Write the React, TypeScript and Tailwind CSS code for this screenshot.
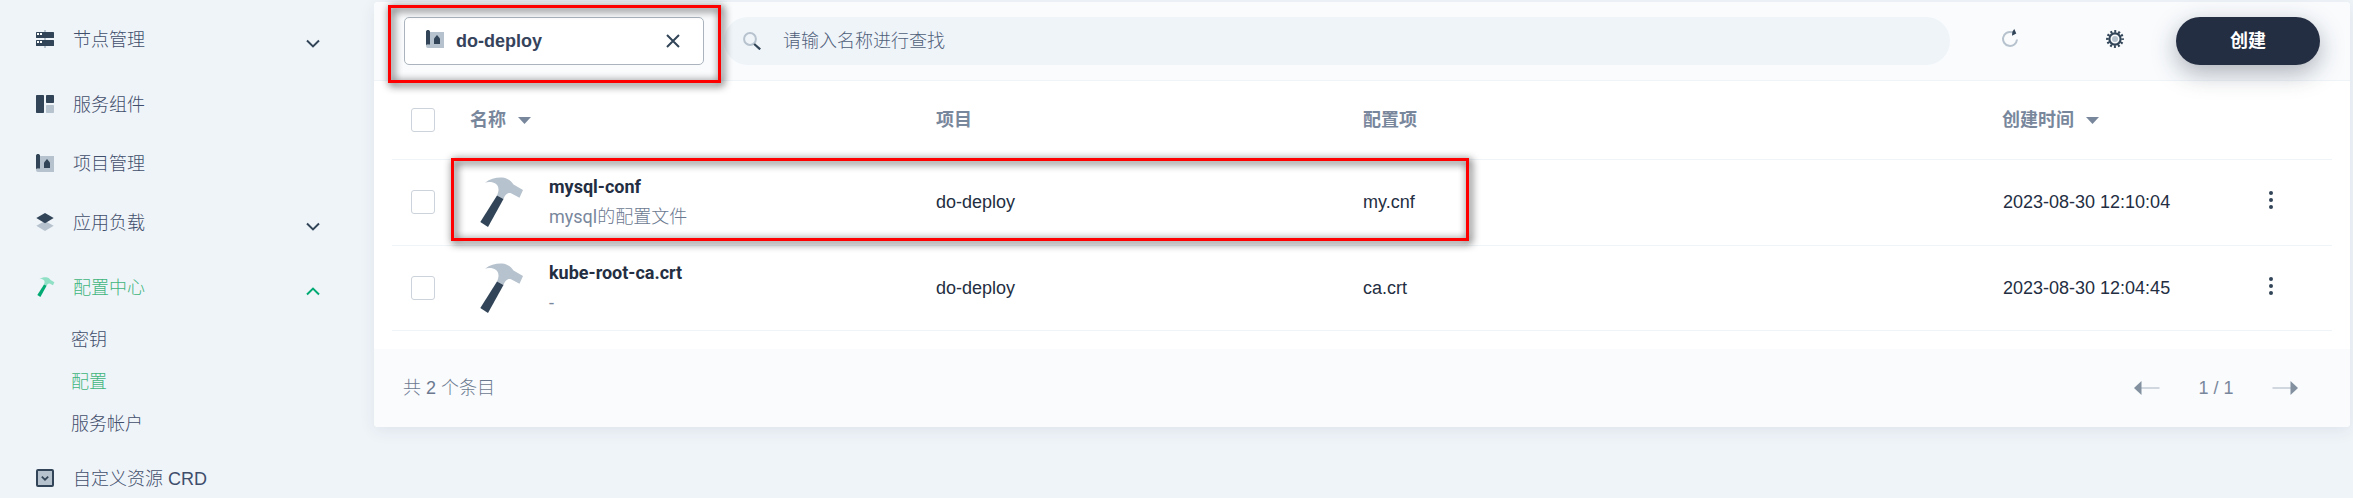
import React from "react";

const DARK = "#324558";
const LIGHT = "#b6c2cd";

function NodesIcon() {
  return (
    <svg width="18" height="18" viewBox="0 0 18 18" className="shrink-0">
      <path d="M8 0h2v18H8z" fill={LIGHT} />
      <rect y="2" width="18" height="6" rx="0.5" fill={DARK} />
      <rect y="10" width="18" height="6" rx="0.5" fill={DARK} />
      <path d="M1 3h2v2H1zM4 3h2v2H4zM1 11h2v2H1zM4 11h2v2H4z" fill="#fff" />
    </svg>
  );
}

function ComponentsIcon() {
  return (
    <svg width="18" height="18" viewBox="0 0 18 18" className="shrink-0">
      <rect width="8" height="18" rx="0.7" fill={DARK} />
      <rect x="10" width="8" height="8" rx="0.7" fill={DARK} />
      <rect x="10" y="10" width="8" height="8" rx="0.7" fill={LIGHT} />
    </svg>
  );
}

function ProjectIcon() {
  return (
    <svg width="18" height="18" viewBox="0 0 18 18" className="shrink-0">
      <path d="M4 2h14v16H2a2 2 0 0 1-2-2v-1l4-1z" fill={LIGHT} />
      <path d="M0 15V1.500C0 .6.9 0 2 0s2 .6 2 1.500V14.500H2Q.6 14.400 0 15z" fill={DARK} />
      <path d="M8 14V8.500L11 5l3 3.500V14z" fill={DARK} />
    </svg>
  );
}

function LayersIcon() {
  return (
    <svg width="18" height="18" viewBox="0 0 18 18" className="shrink-0">
      <path d="M9 8l8.700 4.800L9 18 .3 12.800z" fill={LIGHT} />
      <path d="M9 0l8.700 5L9 10.200.3 5z" fill={DARK} />
    </svg>
  );
}

function Hammer({ size, head, handle }: { size: number; head: string; handle: string }) {
  return (
    <svg width={size} height={size} viewBox="0 0 50 50" className="shrink-0">
      <path d="M8 5.700C13 1.500 19 .2 25 .4c5 .4 9 3 11.500 7L46 13l-3.500 7.800L34 16.200c-4-.7-6 2-7.500 5.800L20 18.500C23 12 21.500 7 16 5.500 13 4.900 10 5 8 5.700z" fill={head} />
      <path d="M20 18.500l6.500 3.500L11 50l-7.700-5z" fill={handle} />
    </svg>
  );
}

function CrdIcon() {
  return (
    <svg width="18" height="18" viewBox="0 0 18 18" className="shrink-0">
      <rect x="1" y="1" width="16" height="16" rx="1" fill={LIGHT} stroke={DARK} strokeWidth="2" />
      <path d="M5.800 7.600L9 10.700l3.200-3.100" fill="none" stroke={DARK} strokeWidth="1.700" />
    </svg>
  );
}

function Chevron({ up = false }: { up?: boolean }) {
  return (
    <svg width="14" height="9" viewBox="0 0 14 9" className="mt-1.5 shrink-0">
      <path d={up ? "M1 7.500L7 1.600l6 5.900" : "M1 1.500l6 5.900 6-5.900"} fill="none" stroke={up ? "#00aa72" : DARK} strokeWidth="2" />
    </svg>
  );
}

function NavItem({ icon, label, className, chevron }: { icon: React.ReactNode; label: string; className: string; chevron?: React.ReactNode }) {
  return (
    <div className={`flex h-7 items-center pl-9 pr-[54px] ${className}`}>
      <span className="-mt-[3px] flex w-[37px] shrink-0">{icon}</span>
      <span className="flex-1 whitespace-nowrap">{label}</span>
      {chevron}
    </div>
  );
}

function Sidebar() {
  return (
    <nav className="w-[374px] shrink-0 pt-[26px] text-[#3f4e6b] font-light">
      <NavItem icon={<NodesIcon />} label="节点管理" className="mb-[37px]" chevron={<Chevron />} />
      <NavItem icon={<ComponentsIcon />} label="服务组件" className="mb-[31px]" />
      <NavItem icon={<ProjectIcon />} label="项目管理" className="mb-[31px]" />
      <NavItem icon={<LayersIcon />} label="应用负载" className="mb-[37px]" chevron={<Chevron />} />
      <NavItem icon={<Hammer size={20} head="#90e0c5" handle="#00aa72" />} label="配置中心" className="mb-6 text-[#3fb57c]" chevron={<Chevron up />} />
      <div className="mb-[27px] flex flex-col gap-3.5 pl-[71px]">
        <span className="h-7 leading-7">密钥</span>
        <span className="h-7 leading-7 text-[#3fb57c]">配置</span>
        <span className="h-7 leading-7">服务帐户</span>
      </div>
      <NavItem icon={<CrdIcon />} label="自定义资源 CRD" className="" />
    </nav>
  );
}

function Gear() {
  return (
    <svg width="18" height="18" viewBox="-9 -9 18 18" className="shrink-0">
      <circle r="7.600" fill="none" stroke={DARK} strokeWidth="2.600" strokeDasharray="1.990 1.990" strokeDashoffset="1" />
      <circle r="5.600" fill="#f9fbfd" stroke={DARK} strokeWidth="2.200" />
      <circle r="3" fill={LIGHT} />
    </svg>
  );
}

function Refresh() {
  return (
    <svg width="18" height="18" viewBox="0 0 18 18" className="shrink-0">
      <path d="M10 3.200A7 7 0 1 0 15 10.500" fill="none" stroke={LIGHT} strokeWidth="2" />
      <path d="M12.300 0l2 4.500-4.300 2.300.3-4z" fill={DARK} />
    </svg>
  );
}

function Toolbar() {
  return (
    <div className="flex h-[79px] items-start rounded-t-[4px] border-b border-[#eff4f9] bg-[#f9fbfd] pl-[30px] pr-[30px] pt-[15px]">
      <div className="flex h-12 w-[300px] shrink-0 items-center rounded-[5px] border border-[#abb4be] bg-white pl-[21px] pr-[23px]">
        <span className="-mt-1"><ProjectIcon /></span>
        <span className="ml-3 flex-1 font-bold text-[#36435c]">do-deploy</span>
        <svg width="14" height="14" viewBox="0 0 14 14">
          <path d="M1 1l12 12M13 1L1 13" stroke={DARK} strokeWidth="2" />
        </svg>
      </div>
      <div className="ml-5 flex h-12 w-[1226px] items-center rounded-full bg-[#eff4f9] pl-[19px] font-light text-[#4f6079]">
        <svg width="18" height="18" viewBox="0 0 18 18">
          <circle cx="7" cy="7" r="5.900" fill="none" stroke={LIGHT} strokeWidth="2" />
          <path d="M11.200 12l6 5.400" stroke={DARK} strokeWidth="2.200" />
        </svg>
        <span className="ml-[22px]">请输入名称进行查找</span>
      </div>
      <span className="ml-[52px] mt-3"><Refresh /></span>
      <span className="ml-[86px] mt-[13px]"><Gear /></span>
      <button className="ml-[52px] h-12 w-36 rounded-full bg-[#242e42] font-bold text-white shadow-[0_8px_24px_0_rgba(36,46,66,0.36)]">创建</button>
    </div>
  );
}

function Checkbox() {
  return <span className="block h-6 w-6 rounded-[3px] border border-[#ccd3db] bg-white" />;
}

function Caret() {
  return (
    <svg width="13" height="7" viewBox="0 0 13 7">
      <path d="M0 0h13L6.500 7z" fill="#79879c" />
    </svg>
  );
}

const GRID = "grid grid-cols-[79px_465px_427px_640px_1fr] items-center border-b border-[#eff4f9]";

type RowProps = { name: string; desc: React.ReactNode; project: string; item: string; time: string; className: string };

function Row({ name, desc, project, item, time, className }: RowProps) {
  return (
    <div className={`${GRID} ${className} text-[#242e42]`}>
      <span className="pl-[19px]"><Checkbox /></span>
      <div className="flex items-center gap-[22px] pl-1.5">
        <Hammer size={50} head={LIGHT} handle={DARK} />
        <div className="font-[Roboto,'Noto_Sans_CJK_SC',sans-serif]">
          <div className="h-[30px] font-bold leading-[30px]">{name}</div>
          <div className="h-[30px] leading-[30px] text-[#79879c]">{desc}</div>
        </div>
      </div>
      <span>{project}</span>
      <span>{item}</span>
      <span className="flex items-center">
        <span className="w-[265px]">{time}</span>
        <svg width="6" height="18" viewBox="0 0 6 18" className="-mt-1">
          <circle cx="3" cy="2" r="2" fill={DARK} />
          <circle cx="3" cy="9" r="2" fill={DARK} />
          <circle cx="3" cy="16" r="2" fill={DARK} />
        </svg>
      </span>
    </div>
  );
}

export default function App() {
  return (
    <div className="relative flex h-[498px] w-[2353px] overflow-hidden bg-[#eff4f9] font-['Liberation_Sans','Noto_Sans_CJK_SC',sans-serif] text-[18px] leading-7">
      <Sidebar />
      <main className="mt-0.5 flex h-[425px] w-[1976px] flex-col rounded-[4px] bg-white shadow-[0_4px_16px_0_rgba(36,46,66,0.08)]">
        <Toolbar />
        <div className="h-[268px] px-[18px]">
          <div className={`${GRID} h-[79px] font-bold text-[#79879c]`}>
            <span className="pl-[19px]"><Checkbox /></span>
            <span className="-ml-px flex items-center gap-3">名称 <Caret /></span>
            <span>项目</span>
            <span>配置项</span>
            <span className="-ml-px flex items-center gap-3">创建时间 <Caret /></span>
          </div>
          <Row
            className="h-[86px] pb-px"
            name="mysql-conf"
            desc={<>mysql<span className="font-light text-[#6b7990]">的配置文件</span></>}
            project="do-deploy"
            item="my.cnf"
            time="2023-08-30 12:10:04"
          />
          <Row className="h-[85px]" name="kube-root-ca.crt" desc="-" project="do-deploy" item="ca.crt" time="2023-08-30 12:04:45" />
        </div>
        <footer className="flex h-[78px] items-center rounded-b-[4px] bg-[#f9fbfd] pl-[29px] pr-[52px] text-[#79879c]">
          <span className="flex-1 font-light text-[#6b7990]">共 2 个条目</span>
          <svg width="26" height="14" viewBox="0 0 26 14">
            <path d="M7 6h18.500v2H7z" fill="#d0d7de" />
            <path d="M0 7l7.500-7v14z" fill="#82909f" />
          </svg>
          <span className="w-[112px] text-center">1 / 1</span>
          <svg width="26" height="14" viewBox="0 0 26 14">
            <path d="M.5 6H19v2H.500z" fill="#d0d7de" />
            <path d="M26 7l-7.500-7v14z" fill="#82909f" />
          </svg>
        </footer>
      </main>
      <div className="pointer-events-none absolute left-[388px] top-[5px] h-[78px] w-[333px] border-[3px] border-[#ff0000] drop-shadow-[2px_2px_4px_rgba(0,0,0,0.95)]" />
      <div className="pointer-events-none absolute left-[451px] top-[158px] h-[83px] w-[1018px] border-[3px] border-[#ff0000] drop-shadow-[2px_2px_4px_rgba(0,0,0,0.95)]" />
    </div>
  );
}
